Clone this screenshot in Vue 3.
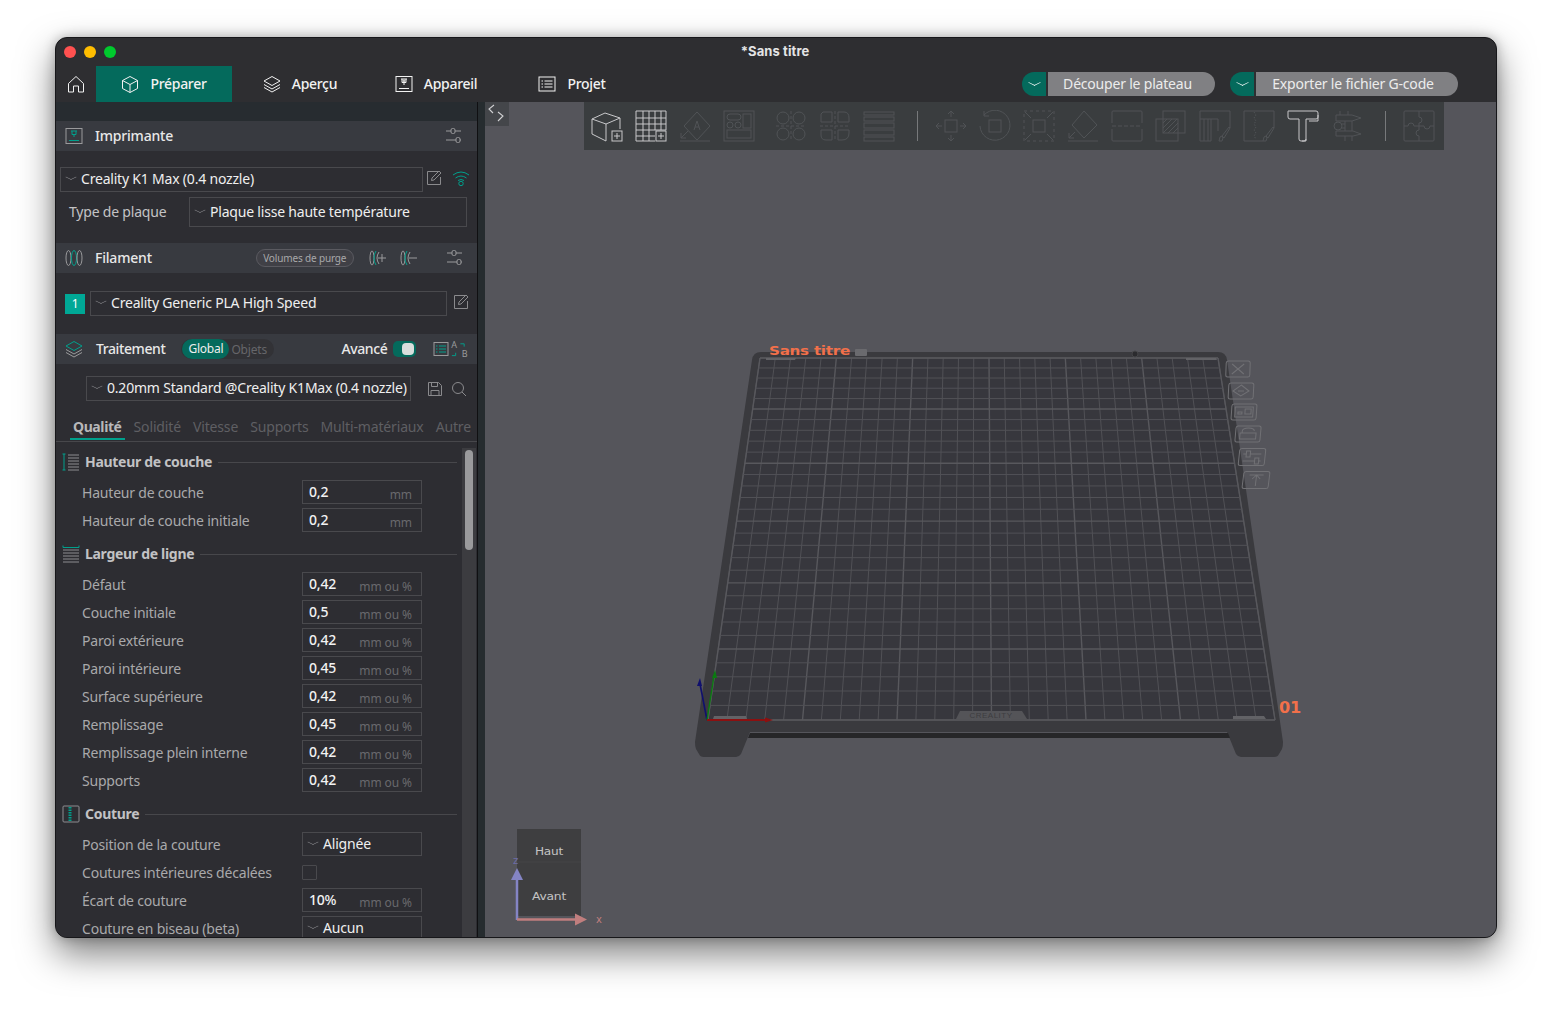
<script setup>
const icons = {
  home: '<path d="M1.500 8.500 9 1.500l7.500 7V17H11.500v-6h-5v6H1.500z"/>',
  box: '<path d="M9 1.500 16.500 5.500v8L9 17.500 1.500 13.500v-8zM1.500 5.500 9 9.500l7.500-4M9 9.500v8"/>',
  layers: '<path d="M9 1.500 17 6 9 10.500 1 6zM1 9.500 9 14l8-4.500M1 12.500 9 17l8-4.500"/>',
  device: '<rect x="1" y="1.500" width="16" height="15"/><path d="M4 13.500h10M6 4h6M7 4v3.500h4V4M9 7.500V10"/><circle cx="9" cy="6" r="1"/>',
  list: '<rect x="1" y="2" width="16" height="14"/><path d="M3.500 6h1.500M6.500 6h8M3.500 9h1.500M6.500 9h8M3.500 12h1.500M6.500 12h8"/>',
  sliders: '<path d="M1 4h5M10 4h6M1 13h10M15 13h1"/><rect x="6" y="1.500" width="4" height="5" rx="1.500"/><rect x="11" y="10.500" width="4" height="5" rx="1.500"/>',
  edit: '<path d="M14 1.500H1.500v13h13V7"/><path d="M5.500 10.500 6 8 13 1l2 2-7 7z"/>',
  save: '<path d="M1.500 1.500h10l3 3v10h-13z"/><path d="M4.500 1.500v4h6v-4M4 14.500v-5h8v5"/>',
  search: '<circle cx="7" cy="7" r="5.500"/><path d="m11 11 4 4"/>',
  cube: '<path d="M1 9 14 3l15 5-14 6zM1 9v15l14 7M15 14v17M29 8v11"/><rect x="21" y="21" width="10" height="10"/><path d="M23 26h6M26 23v6"/>',
  grid: '<path d="M20 31H1V1h30v19M1 8h30M1 14h30M1 20h30M1 26h19M8 1v30M14 1v30M20 1v19M26 1v19"/><rect x="21" y="21" width="10" height="10"/><path d="M23 26h6M26 23v6"/>',
  orient: '<path d="m18 2 13 14-13 14L5 16z"/><path d="M1 31h30M2 28l7-7M2 23v5h5"/><path d="m15 20 3-9 3 9M16 17h4"/>',
  arrange: '<rect x="1" y="1" width="30" height="30"/><rect x="4" y="4" width="14" height="6" rx="3"/><rect x="20" y="4" width="8" height="14"/><circle cx="7" cy="15" r="3"/><circle cx="15" cy="15" r="3"/><rect x="4" y="20" width="24" height="8"/>',
  splitO: '<circle cx="8" cy="8" r="6"/><circle cx="24" cy="8" r="6"/><circle cx="8" cy="24" r="6"/><circle cx="24" cy="24" r="6"/><path d="M16 1v30M1 16h30" stroke-dasharray="3 2"/>',
  splitD: '<path d="M13 2H4l-2 2v8h11zM19 2h6q5 0 5 6v4H19zM13 20H2v5q0 5 5 5h6zM19 20h11v3q0 7-7 7h-4z"/><path d="M16 1v30M1 16h30" stroke-dasharray="3 2"/>',
  layersFlat: '<rect x="1" y="2" width="30" height="3"/><rect x="1" y="7" width="30" height="4"/><rect x="1" y="13" width="30" height="5"/><rect x="1" y="20" width="30" height="5"/><rect x="1" y="27" width="30" height="4"/>',
  move: '<rect x="10" y="10" width="12" height="12"/><path d="M16 1v6M13 4l3-3 3 3M16 31v-6M13 28l3 3 3-3M1 16h6M4 13l-3 3 3 3M31 16h-6M28 13l3 3-3 3"/>',
  rotate: '<rect x="10" y="10" width="12" height="12"/><path d="M5 5A15 15 0 1 1 1 16M5 1v5h5"/>',
  scale: '<rect x="10" y="10" width="12" height="12"/><path d="M1 1h30v30H1z" stroke-dasharray="3 3"/><path d="m2 2 6 6M2 30l6-6M30 2l-6 6M30 30l-6-6"/>',
  flat: '<path d="M17 1 30 15 17 28 5 15z"/><path d="M1 31h30M2 28l6-6M2 23v5h5"/>',
  cut: '<path d="M1 13V2q0-1 1-1h28q1 0 1 1v11M1 19v11q0 1 1 1h28q1 0 1-1V19"/><path d="M1 16h30" stroke-dasharray="4 2"/>',
  bool: '<rect x="8" y="1" width="22" height="22"/><rect x="1" y="9" width="22" height="22"/><path d="M8 13l4-4M8 18l9-9M8 23l14-14M13 23l10-10M18 23l5-5"/>',
  support: '<path d="M1 31V1h30v17M1 31h11M1 9h18v12M5 9v22M9 9v22M12 9v22"/><path d="m20 31 1-4 2-1 1 2-1 3zM23 26l7-9 1 1-6 10z"/>',
  seam: '<path d="M31 18V1H1v30h19"/><path d="m11 2 2 3-2 3 2 3-2 3 2 3-2 3 2 3-2 3 2 3" stroke-dasharray="1.500 1.500"/><path d="m20 31 1-4 2-1 1 2-1 3zM23 26l7-9 1 1-6 10z"/>',
  text: '<path d="M1 1h28q2 0 2 2v4q0 2-2 2H19v20q0 2-2 2h-3q-2 0-2-2V9H3Q1 9 1 7V3q0-2 0-2z"/><path d="M31 5v6h-9M19 29v2h-4"/>',
  measure: '<path d="M5 5h16l9 3-9 3H5zM5 21h17l8 3-8 2H5zM9 1v4M17 1v4M14 11v10M21 11v10M14 26v5M21 26v5"/><circle cx="7" cy="16" r="4"/><path d="M11 14h3M11 18h3"/>',
  puzzle: '<rect x="1" y="1" width="30" height="30" rx="1"/><path d="M16 1v6a3 3 0 0 1 0 6v3M16 16h-5a3 3 0 0 0-6 0H1M16 16v4a3 3 0 0 0 0 6v5M16 16h5a3 3 0 0 0 6 0h4"/>',
  spool: '<ellipse cx="3.500" cy="9" rx="2.500" ry="7.500"/><ellipse cx="9" cy="9" rx="2.500" ry="7.500" stroke="#00a08c"/><ellipse cx="14.500" cy="9" rx="2.500" ry="7.500"/>',
  spoolAdd: '<ellipse cx="3" cy="9" rx="2" ry="7"/><path d="M7 2q-2 3-2 7t2 7" stroke="#00a08c"/><path d="M10 3q-2 3-2 6t2 6"/><path d="M9 9h8M13 5v8"/>',
  spoolDel: '<ellipse cx="3" cy="9" rx="2" ry="7"/><path d="M7 2q-2 3-2 7t2 7" stroke="#00a08c"/><path d="M10 3q-2 3-2 6t2 6"/><path d="M9 9h8"/>',
  abSwap: '<path d="M11 3.500h4v3" stroke="#00a08c"/><path d="M2 16h4v-3" stroke="#00a08c"/>',
  heightI: '<path d="M2 1v16M.500 1h3M.500 17h3" stroke="#00a08c"/><path d="M6 2h11M6 5h11M6 8h11M6 11h11M6 14h11M6 17h11"/>',
  widthI: '<path d="M1 .500v2h16v-2" stroke="#00a08c"/><path d="M1 5h16M1 8h16M1 11h16M1 14h16M1 17h16"/>',
  seamI: '<rect x="1" y="1" width="16" height="16" rx="1"/><path d="M8 2v14" stroke="#00a08c" stroke-width="3" stroke-dasharray="1.500 1"/>'
}

const toolbar = [
  { icon: 'cube', on: true }, { icon: 'grid', on: true }, { icon: 'orient' }, { icon: 'arrange' },
  { icon: 'splitO', gap: true }, { icon: 'splitD' }, { icon: 'layersFlat' },
  { sep: true },
  { icon: 'move' }, { icon: 'rotate' }, { icon: 'scale' }, { icon: 'flat' }, { icon: 'cut' }, { icon: 'bool' },
  { icon: 'support' }, { icon: 'seam' }, { icon: 'text', on: true }, { icon: 'measure' },
  { sep: true },
  { icon: 'puzzle' }
]

const tabs = [
  { label: 'Préparer', icon: 'box', active: true },
  { label: 'Aperçu', icon: 'layers' },
  { label: 'Appareil', icon: 'device' },
  { label: 'Projet', icon: 'list' }
]

const qualityTabs = ['Qualité', 'Solidité', 'Vitesse', 'Supports', 'Multi-matériaux', 'Autre']

const sections = [
  {
    title: 'Hauteur de couche', icon: 'heightI',
    rows: [
      { label: 'Hauteur de couche', value: '0,2', unit: 'mm' },
      { label: 'Hauteur de couche initiale', value: '0,2', unit: 'mm' }
    ]
  },
  {
    title: 'Largeur de ligne', icon: 'widthI',
    rows: [
      { label: 'Défaut', value: '0,42', unit: 'mm ou %' },
      { label: 'Couche initiale', value: '0,5', unit: 'mm ou %' },
      { label: 'Paroi extérieure', value: '0,42', unit: 'mm ou %' },
      { label: 'Paroi intérieure', value: '0,45', unit: 'mm ou %' },
      { label: 'Surface supérieure', value: '0,42', unit: 'mm ou %' },
      { label: 'Remplissage', value: '0,45', unit: 'mm ou %' },
      { label: 'Remplissage plein interne', value: '0,42', unit: 'mm ou %' },
      { label: 'Supports', value: '0,42', unit: 'mm ou %' }
    ]
  },
  {
    title: 'Couture', icon: 'seamI',
    rows: [
      { label: 'Position de la couture', select: 'Alignée' },
      { label: 'Coutures intérieures décalées', check: true },
      { label: 'Écart de couture', value: '10%', unit: 'mm ou %' },
      { label: 'Couture en biseau (beta)', select: 'Aucun' }
    ]
  }
]

// plate grid in page coordinates, with a perspective squeeze towards the back
const TL = 760, TR = 1218, BL = 708, BR = 1275, TY = 358, BY = 720
const cols = 30
const rows = 30
const gridLines = []
for (let i = 0; i <= cols; i++) {
  gridLines.push({
    x1: TL + (TR - TL) * i / cols, y1: TY,
    x2: BL + (BR - BL) * i / cols, y2: BY,
    thick: i % 5 === 0
  })
}
for (let j = 0; j <= rows; j++) {
  const s = j / rows
  const p = 0.82 * s / (1 - 0.18 * s)
  gridLines.push({
    x1: TL + (BL - TL) * p, y1: TY + (BY - TY) * p,
    x2: TR + (BR - TR) * p, y2: TY + (BY - TY) * p,
    thick: j % 5 === 0
  })
}

const plateMarks = [
  { x: 1238, y: 369, w: 24, h: 16, skew: -2 },
  { x: 1241, y: 391, w: 25, h: 16, skew: -3 },
  { x: 1244, y: 412, w: 25, h: 16, skew: -4 },
  { x: 1248, y: 434, w: 25, h: 16, skew: -5 },
  { x: 1252, y: 457, w: 26, h: 17, skew: -6 },
  { x: 1256, y: 480, w: 26, h: 17, skew: -7 }
]
</script>

<template>
  <div class="page">
    <div class="window">
      <div class="titlebar">
        <div class="lights">
          <span class="light red"></span>
          <span class="light yellow"></span>
          <span class="light green"></span>
        </div>
        <span class="title">*Sans titre</span>
      </div>

      <div class="menubar">
        <div class="homeBtn">
          <svg class="ico i18" viewBox="0 0 18 18" v-html="icons.home"></svg>
        </div>
        <div v-for="tab in tabs" :key="tab.label" class="menuTab" :class="{ active: tab.active }">
          <svg class="ico i18" viewBox="0 0 18 18" v-html="icons[tab.icon]"></svg>
          <span class="up">{{ tab.label }}</span>
        </div>
        <div class="actions">
          <div class="splitBtn slice">
            <span class="splitArrow"><i class="chev white"></i></span>
            <span class="splitLabel"><span class="up">Découper le plateau</span></span>
          </div>
          <div class="splitBtn export">
            <span class="splitArrow"><i class="chev white"></i></span>
            <span class="splitLabel"><span class="up">Exporter le fichier G-code</span></span>
          </div>
        </div>
      </div>

      <div class="body">
        <aside class="sidebar">
          <div class="topStrip"></div>

          <div class="panelHead">
            <svg class="ico i18 headIco" viewBox="0 0 18 18">
              <rect x="1" y="1.500" width="16" height="15" stroke="#9a9a9c" />
              <path d="M4 13.500h10M6 4h6M7 4v3.500h4V4M9 7.500V10" stroke="#00a08c" />
            </svg>
            <span class="headTitle up">Imprimante</span>
            <svg class="ico i18 headEnd" viewBox="0 0 18 18" v-html="icons.sliders"></svg>
          </div>

          <div class="printerRow">
            <div class="combo printerCombo"><i class="chev"></i><span class="up">Creality K1 Max (0.4 nozzle)</span></div>
            <svg class="ico i16 dim raised" viewBox="0 0 16 16" v-html="icons.edit"></svg>
            <svg class="wifi raised" viewBox="0 0 18 18" fill="none" stroke="#00a08c">
              <path d="M1 6q8-6 16 0M3.500 9q5.500-4 11 0M6 11.500q3-2 6 0" />
              <circle cx="9" cy="14.500" r="2.200" />
            </svg>
          </div>
          <div class="plateRow">
            <span class="plateLabel up">Type de plaque</span>
            <div class="combo plateCombo"><i class="chev"></i><span class="up">Plaque lisse haute température</span></div>
          </div>

          <div class="panelHead filamentHead">
            <svg class="ico i18 headIco" viewBox="0 0 18 18" v-html="icons.spool"></svg>
            <span class="headTitle up">Filament</span>
            <span class="purge">Volumes de purge</span>
            <svg class="ico i18 spoolBtn" viewBox="0 0 18 18" v-html="icons.spoolAdd"></svg>
            <svg class="ico i18 spoolBtn" viewBox="0 0 18 18" v-html="icons.spoolDel"></svg>
            <svg class="ico i18 filamentEnd" viewBox="0 0 18 18" v-html="icons.sliders"></svg>
          </div>

          <div class="filamentRow">
            <span class="badge">1</span>
            <div class="combo filamentCombo"><i class="chev"></i><span class="up">Creality Generic PLA High Speed</span></div>
            <svg class="ico i16 dim raised" viewBox="0 0 16 16" v-html="icons.edit"></svg>
          </div>

          <div class="panelHead processHead">
            <svg class="ico i18 headIco" viewBox="0 0 18 18">
              <path d="M9 1.500 17 6 9 10.500 1 6z" stroke="#00a08c" />
              <path d="M1 9.500 9 14l8-4.500M1 12.500 9 17l8-4.500" />
            </svg>
            <span class="headTitle up">Traitement</span>
            <div class="scope">
              <span class="scopeOn">Global</span>
              <span class="scopeOff">Objets</span>
            </div>
            <span class="advanced up">Avancé</span>
            <span class="toggle"><i></i></span>
            <svg class="ico i16 listIco" viewBox="0 0 16 16">
              <rect x="1" y="1.500" width="14" height="13" stroke="#9a9a9c" />
              <path d="M3 5h1.500M6 5h7M3 8h1.500M6 8h7M3 11h1.500M6 11h7" stroke="#00a08c" />
            </svg>
            <div class="abSwap">
              <svg viewBox="0 0 18 18" class="ico" v-html="icons.abSwap"></svg>
              <span class="abA">A</span>
              <span class="abB">B</span>
            </div>
          </div>

          <div class="presetRow">
            <div class="combo presetCombo"><i class="chev"></i><span class="up">0.20mm Standard @Creality K1Max (0.4 nozzle)</span></div>
            <svg class="ico i16 dim" viewBox="0 0 16 16" v-html="icons.save"></svg>
            <svg class="ico i16 dim" viewBox="0 0 16 16" v-html="icons.search"></svg>
          </div>

          <div class="qualityTabs">
            <span v-for="(t, i) in qualityTabs" :key="t" class="qTab" :class="{ on: i === 0 }">{{ t }}</span>
          </div>

          <div class="settings">
            <div class="settingsList">
              <section v-for="sec in sections" :key="sec.title" class="sec">
                <div class="secHead">
                  <svg class="ico i18 secIco" viewBox="0 0 18 18" v-html="icons[sec.icon]"></svg>
                  <span class="secTitle up">{{ sec.title }}</span>
                  <span class="secLine"></span>
                </div>
                <div v-for="row in sec.rows" :key="row.label" class="row">
                  <span class="rowLabel">{{ row.label }}</span>
                  <div v-if="row.select" class="combo rowCombo"><i class="chev"></i><span class="up">{{ row.select }}</span></div>
                  <span v-else-if="row.check" class="check"></span>
                  <div v-else class="field">
                    <span class="fieldValue up">{{ row.value }}</span>
                    <span class="fieldUnit">{{ row.unit }}</span>
                  </div>
                </div>
              </section>
            </div>
            <div class="scrollbar"><i></i></div>
          </div>
        </aside>

        <div class="gutter"></div>

        <main class="viewport">
          <svg class="scene" viewBox="485 102 1012 836">
            <path d="M752 360q1-8 9-8h457q8 0 9 8l56 382q0 5-1 7l-3 5q-1 3-5 3h-33q-3 0-5-3l-9-22H750l-9 22q-2 3-5 3h-32q-4 0-5-3l-3-5q-1-2-1-7z" fill="#3a3a3e" />
            <path d="M750 733h478l2 5H748z" fill="#262628" />
            <path d="M760 358h458l57 362H708z" fill="#37373d" stroke="#535357" />
            <line v-for="(l, i) in gridLines" :key="i" :x1="l.x1" :y1="l.y1" :x2="l.x2" :y2="l.y2"
              :stroke="l.thick ? '#58585d' : '#515156'" :stroke-width="l.thick ? 1.4 : 1" />
            <path d="M766 358h30l-1 2h-29zM1186 358h30l1 2h-31zM713 719l1-3h32l1 3zM1233 719v-3h31l2 3z" fill="#626266" />
            <path d="M960 711h62l5 8h-71z" fill="#545458" />
            <text x="991" y="718" class="brand">CREALITY</text>
            <circle cx="1135" cy="354" r="3" fill="#2b2b2e" stroke="#454548" />
            <text x="769" y="355" class="plateName" textLength="81" lengthAdjust="spacingAndGlyphs">Sans titre</text>
            <rect x="855" y="349" width="12" height="7" rx="1" fill="#6a6a6e" />
            <text x="1279" y="713" class="plateNo" textLength="22" lengthAdjust="spacingAndGlyphs">01</text>

            <g v-for="(m, i) in plateMarks" :key="i" :transform="`translate(${m.x} ${m.y}) skewX(${m.skew})`">
              <rect :x="-m.w / 2" :y="-m.h / 2" :width="m.w" :height="m.h" rx="2" fill="none" stroke="#717175" />
              <path v-if="i === 0" d="M-6-5 6 5M6-5-6 5" stroke="#717175" fill="none" />
              <path v-else-if="i === 1" d="M0-6 8 0 0 5-8 0zM-3 0h6" stroke="#717175" fill="none" />
              <path v-else-if="i === 2" d="M-9-5H9V5H-9zM1-3H7V2H1zM-6 0h4v2h-4z" stroke="#717175" fill="none" />
              <path v-else-if="i === 3" d="M-8-1H8V5H-8zM-6-1V-3Q-6-6 0-6 6-6 6-3" stroke="#717175" fill="none" />
              <path v-else-if="i === 4" d="M-9-3h3M-2-3H9M-9 4H3M7 4h2M-6-6h4v6h-4zM3 1h4v6H3z" stroke="#717175" fill="none" />
              <path v-else d="M-7-5H7M0-5V6M-4-1 0-5 4-1" stroke="#717175" fill="none" />
            </g>

            <line x1="707" y1="720" x2="700" y2="684" stroke="#10106e" stroke-width="1.600" />
            <path d="m700 678-3 8h5z" fill="#10106e" />
            <line x1="707" y1="720" x2="714" y2="676" stroke="#0a7a10" stroke-width="1.400" />
            <path d="m715 670-3 8h5z" fill="#0a7a10" />
            <line x1="707" y1="720" x2="766" y2="720" stroke="#8c1010" stroke-width="2" />
            <path d="m773 720-8-2.500v5z" fill="#8c1010" />

            <rect x="517" y="829" width="64" height="87" fill="#3e3e40" />
            <line x1="517" y1="862" x2="581" y2="862" stroke="#444447" />
            <text x="549" y="855" class="navText" textLength="28" lengthAdjust="spacingAndGlyphs">Haut</text>
            <text x="549" y="900" class="navText" textLength="34" lengthAdjust="spacingAndGlyphs">Avant</text>
            <line x1="517" y1="920" x2="517" y2="878" stroke="#8484c4" stroke-width="2.500" />
            <path d="m517 868-6 12h12z" fill="#8484c4" />
            <line x1="517" y1="919.500" x2="577" y2="919.500" stroke="#c07e7e" stroke-width="2.500" />
            <path d="m587 919.500-12-6v12z" fill="#c07e7e" />
            <text x="513" y="864" class="axisZ">z</text>
            <text x="596" y="923" class="axisX">x</text>
          </svg>

          <div class="collapseBtn">
            <svg viewBox="0 0 24 24" fill="none" stroke="#d0d0d2" stroke-width="1.100">
              <path d="M9 3 4 7l4 4M13 10l5 4-5 5" />
            </svg>
          </div>

          <div class="toolbar">
            <template v-for="(t, i) in toolbar" :key="i">
              <span v-if="t.sep" class="toolSep"></span>
              <svg v-else class="ico toolIco" :class="{ on: t.on, gap: t.gap }" viewBox="0 0 32 32" v-html="icons[t.icon]"></svg>
            </template>
          </div>
        </main>
      </div>
    </div>
  </div>
</template>

<style scoped>
.page {
  box-sizing: border-box;
  width: 1552px;
  height: 1012px;
  padding: 37px 55px 74px;
  background: #fff;
  font-family: "Noto Sans", "Liberation Sans", sans-serif;
  font-size: 14px;
  letter-spacing: -0.2px;
}

.window {
  display: flex;
  flex-direction: column;
  height: 901px;
  width: 1442px;
  background: #2e2e31;
  border: 1px solid #17171a;
  box-sizing: border-box;
  border-radius: 12px;
  overflow: hidden;
  box-shadow: 0 16px 36px rgba(0, 0, 0, 0.5), 0 0 12px rgba(0, 0, 0, 0.25);
}

.ico {
  display: block;
  flex: none;
  fill: none;
  stroke: currentColor;
  stroke-width: 1;
}
.i18 { width: 18px; height: 18px; }
.i16 { width: 16px; height: 16px; }
.dim { color: #8a8a8d; }
.raised { margin-top: -3px; }
/* Noto sits a touch low in its line box */
.up { padding-bottom: 2px; }

.titlebar {
  position: relative;
  flex: none;
  height: 28px;
  display: flex;
  align-items: center;
  justify-content: center;
}
.lights {
  position: absolute;
  left: 8px;
  top: 8px;
  display: flex;
  gap: 8px;
}
.light {
  width: 12px;
  height: 12px;
  border-radius: 50%;
}
.red { background: #ff5150; }
.yellow { background: #ffbd00; }
.green { background: #00ca2d; }
.title {
  font-family: Inter, "Liberation Sans", sans-serif;
  font-weight: 700;
  font-size: 13px;
  letter-spacing: 0.1px;
  padding-bottom: 2px;
  margin-right: 2px;
  color: #e4e4e5;
}

.menubar {
  flex: none;
  height: 36px;
  display: flex;
  color: #f2f2f2;
}
.homeBtn {
  width: 40px;
  display: flex;
  align-items: center;
  justify-content: center;
  box-sizing: border-box;
}
.menuTab {
  width: 136px;
  display: flex;
  align-items: center;
  justify-content: center;
  gap: 11px;
  font-size: 14px;
  font-weight: 500;
  letter-spacing: -0.3px;
}
.menuTab.active {
  background: #046a5c;
}
.actions {
  margin-left: auto;
  margin-right: 38px;
  display: flex;
  align-items: center;
  gap: 15px;
}
.splitBtn {
  display: flex;
  height: 24px;
  gap: 2px;
}
.splitArrow {
  width: 24px;
  background: #046a5c;
  border-radius: 12px 0 0 12px;
  display: flex;
  align-items: center;
  justify-content: center;
}
.splitLabel {
  background: #808083;
  color: #ececec;
  border-radius: 0 12px 12px 0;
  display: flex;
  align-items: center;
  justify-content: center;
  padding-right: 8px;
  box-sizing: border-box;
}
.slice .splitLabel { width: 167px; }
.export .splitLabel { width: 202px; }

.chev {
  flex: none;
  display: block;
  width: 8px;
  height: 8px;
  margin: -5px 4px 0 1px;
  transform: scaleY(0.5) rotate(45deg);
  border-right: 1px solid #8d8d90;
  border-bottom: 1px solid #8d8d90;
  box-sizing: border-box;
}
.chev.white {
  border-color: #fff;
  margin: -4px 0 0;
  width: 9px;
  height: 9px;
}

.body {
  flex: 1;
  min-height: 0;
  display: flex;
}

.sidebar {
  width: 421px;
  flex: none;
  background: #2d2d32;
  display: flex;
  flex-direction: column;
  border-right: 1px solid #101012;
  color: #e8e8e8;
  overflow: hidden;
}
.topStrip {
  flex: none;
  height: 19px;
  background: #272c30;
}
.panelHead {
  flex: none;
  height: 30px;
  display: flex;
  align-items: center;
  background: #383a40;
  color: #9a9a9c;
}
.headIco { margin-left: 9px; }
.headTitle {
  margin-left: 12px;
  color: #e8e8e8;
  font-weight: 500;
}
.headEnd {
  margin-left: auto;
  margin-right: 14px;
}

.combo {
  box-sizing: border-box;
  display: flex;
  align-items: center;
  border: 1px solid #49494d;
  padding-left: 5px;
  gap: 2px;
  color: #efefef;
  white-space: nowrap;
  overflow: hidden;
}

.printerRow {
  flex: none;
  display: flex;
  align-items: center;
  height: 25px;
  margin-top: 16px;
  padding-left: 4px;
}
.printerCombo {
  width: 363px;
  height: 25px;
}
.printerRow .dim { margin-left: 3px; }
.wifi {
  width: 18px;
  height: 18px;
  margin-left: 10px;
}
.plateRow {
  flex: none;
  display: flex;
  align-items: center;
  height: 30px;
  margin-top: 5px;
  padding-left: 13px;
}
.plateLabel {
  width: 120px;
  color: #c3c3c5;
}
.plateCombo {
  width: 278px;
  height: 30px;
}

.filamentHead {
  margin-top: 16px;
}
.purge {
  margin-left: 104px;
  box-sizing: border-box;
  width: 98px;
  height: 18px;
  border: 1px solid #5a5a60;
  border-radius: 9px;
  background: #404046;
  color: #a8a8aa;
  font-size: 10px;
  letter-spacing: -0.15px;
  line-height: 16px;
  text-align: center;
  white-space: nowrap;
}
.spoolBtn {
  margin-left: 15px;
}
.spoolBtn + .spoolBtn {
  margin-left: 13px;
}
.filamentEnd {
  margin-left: 28px;
}
.filamentRow {
  flex: none;
  display: flex;
  align-items: center;
  height: 25px;
  margin-top: 18px;
  padding-left: 9px;
}
.badge {
  width: 20px;
  height: 20px;
  background: #00a896;
  color: #fff;
  font-size: 12px;
  line-height: 20px;
  text-align: center;
}
.filamentCombo {
  margin-left: 5px;
  width: 357px;
  height: 25px;
}
.filamentRow .dim {
  margin-left: 6px;
}

.processHead {
  margin-top: 18px;
}
.processHead .headTitle {
  margin-left: 13px;
  letter-spacing: -0.4px;
}
.scope {
  margin-left: 16px;
  display: flex;
  align-items: center;
  width: 93px;
  height: 20px;
  border-radius: 10px;
  background: #323236;
  font-size: 12px;
}
.scopeOn {
  width: 47px;
  height: 20px;
  border-radius: 10px;
  background: #046a5c;
  color: #eee;
  text-align: center;
  line-height: 20px;
  margin-left: 1px;
}
.scopeOff {
  color: #66666a;
  margin-left: 2px;
}
.advanced {
  margin-left: 67px;
  color: #e8e8e8;
  font-weight: 500;
  letter-spacing: -0.4px;
}
.toggle {
  margin-left: 6px;
  width: 23px;
  height: 16px;
  border-radius: 5px;
  background: #046a5c;
  display: flex;
  align-items: center;
  justify-content: flex-end;
  padding-right: 2px;
  box-sizing: border-box;
}
.toggle i {
  display: block;
  width: 12px;
  height: 12px;
  border-radius: 4px;
  background: #d8dedc;
}
.listIco { margin-left: 17px; }
.abSwap {
  position: relative;
  margin-left: 1px;
  width: 17px;
  height: 18px;
  color: #9a9a9c;
  font-size: 9px;
  line-height: 9px;
}
.abSwap .ico {
  width: 17px;
  height: 18px;
}
.abA {
  position: absolute;
  left: 1px;
  top: 0;
}
.abB {
  position: absolute;
  right: 0;
  bottom: 0;
}

.presetRow {
  flex: none;
  display: flex;
  align-items: center;
  height: 25px;
  margin-top: 12px;
  padding-left: 30px;
}
.presetCombo {
  width: 325px;
  height: 25px;
}
.presetRow .dim:first-of-type {
  margin-left: 16px;
}
.presetRow .dim:last-of-type {
  margin-left: 8px;
}

.qualityTabs {
  flex: none;
  display: flex;
  height: 27px;
  margin-top: 13px;
  padding-left: 14px;
  gap: 0;
  border-bottom: 1px solid #47474b;
  color: #5f5f63;
}
.qTab {
  box-sizing: border-box;
  padding: 0 3px;
  margin-right: 6px;
  height: 26px;
  line-height: 26px;
  letter-spacing: -0.15px;
  white-space: nowrap;
}
.qTab.on {
  color: #b8b8ba;
  font-weight: 700;
  letter-spacing: -0.4px;
  border-bottom: 2px solid #00a08c;
}

.settings {
  flex: 1;
  min-height: 0;
  display: flex;
}
.settingsList {
  width: 406px;
  flex: none;
  padding-top: 8px;
  overflow: hidden;
}
.sec {
  margin-bottom: 8px;
}
.secHead {
  display: flex;
  align-items: center;
  height: 24px;
  margin-bottom: 4px;
  padding-left: 6px;
}
.secIco {
  color: #8d8d90;
  width: 18px;
}
.secTitle {
  margin-left: 5px;
  color: #c2c2c4;
  font-weight: 700;
  letter-spacing: -0.3px;
  white-space: nowrap;
}
.secLine {
  flex: 1;
  height: 1px;
  margin: 0 5px 0 6px;
  background: #47474b;
}
.row {
  display: flex;
  align-items: center;
  height: 28px;
  padding-left: 26px;
}
.rowLabel {
  width: 220px;
  flex: none;
  color: #a9a9ab;
  white-space: nowrap;
}
.field, .rowCombo {
  box-sizing: border-box;
  width: 120px;
  height: 24px;
  flex: none;
}
.field {
  display: flex;
  align-items: center;
  justify-content: space-between;
  padding: 0 9px 0 6px;
  border: 1px solid #49494d;
}
.fieldValue {
  color: #f2f2f2;
  font-weight: 500;
}
.fieldUnit {
  margin-top: 5px;
  color: #69696d;
  font-size: 12px;
  letter-spacing: -0.1px;
}
.check {
  box-sizing: border-box;
  width: 15px;
  height: 15px;
  border: 1px solid #49494d;
  border-radius: 1px;
}

.scrollbar {
  width: 14px;
  flex: none;
  margin-top: 6px;
  background: #3c3c40;
  display: flex;
  justify-content: center;
}
.scrollbar i {
  display: block;
  width: 8px;
  height: 100px;
  margin-top: 2px;
  border-radius: 4px;
  background: #9a9a9c;
}

.gutter {
  flex: none;
  width: 7px;
  background: #262c2f;
}

.viewport {
  flex: 1;
  min-width: 0;
  position: relative;
  background: #55555b;
  overflow: hidden;
}
.scene {
  position: absolute;
  left: 0;
  top: 0;
  width: 1012px;
  height: 836px;
}
.brand {
  font-family: "Liberation Sans", sans-serif;
  font-size: 8px;
  letter-spacing: 0.5px;
  fill: #3d3d40;
  text-anchor: middle;
}
.plateName {
  font-family: "DejaVu Sans", sans-serif;
  font-weight: 700;
  font-size: 11.500px;
  fill: #f2704a;
}
.plateNo {
  font-family: "DejaVu Sans", sans-serif;
  font-weight: 700;
  font-size: 15px;
  fill: #f2704a;
}
.navText {
  font-family: "DejaVu Sans", sans-serif;
  font-size: 10px;
  fill: #c4c4c4;
  text-anchor: middle;
}
.axisZ {
  font-family: "DejaVu Sans", sans-serif;
  font-size: 10px;
  fill: #6d6da8;
}
.axisX {
  font-family: "DejaVu Sans", sans-serif;
  font-size: 10px;
  fill: #c07e7e;
}

.collapseBtn {
  position: absolute;
  left: 0;
  top: 0;
  width: 24px;
  height: 24px;
  background: #44464a;
}
.collapseBtn svg {
  display: block;
  width: 24px;
  height: 24px;
}

.toolbar {
  position: absolute;
  left: 99px;
  top: 0;
  width: 860px;
  height: 48px;
  box-sizing: border-box;
  padding-left: 7px;
  display: flex;
  align-items: center;
  gap: 12px;
  background: #3a3d3f;
}
.toolIco {
  width: 32px;
  height: 32px;
  color: #505356;
}
.toolIco.on {
  color: #c8c8ca;
}
.toolIco.gap {
  margin-left: 8px;
}
.toolSep {
  flex: none;
  width: 1px;
  height: 30px;
  background: #77797b;
  margin: 0 5px 0 10px;
}
</style>

<style>
html, body {
  margin: 0;
  background: #fff;
}
</style>
